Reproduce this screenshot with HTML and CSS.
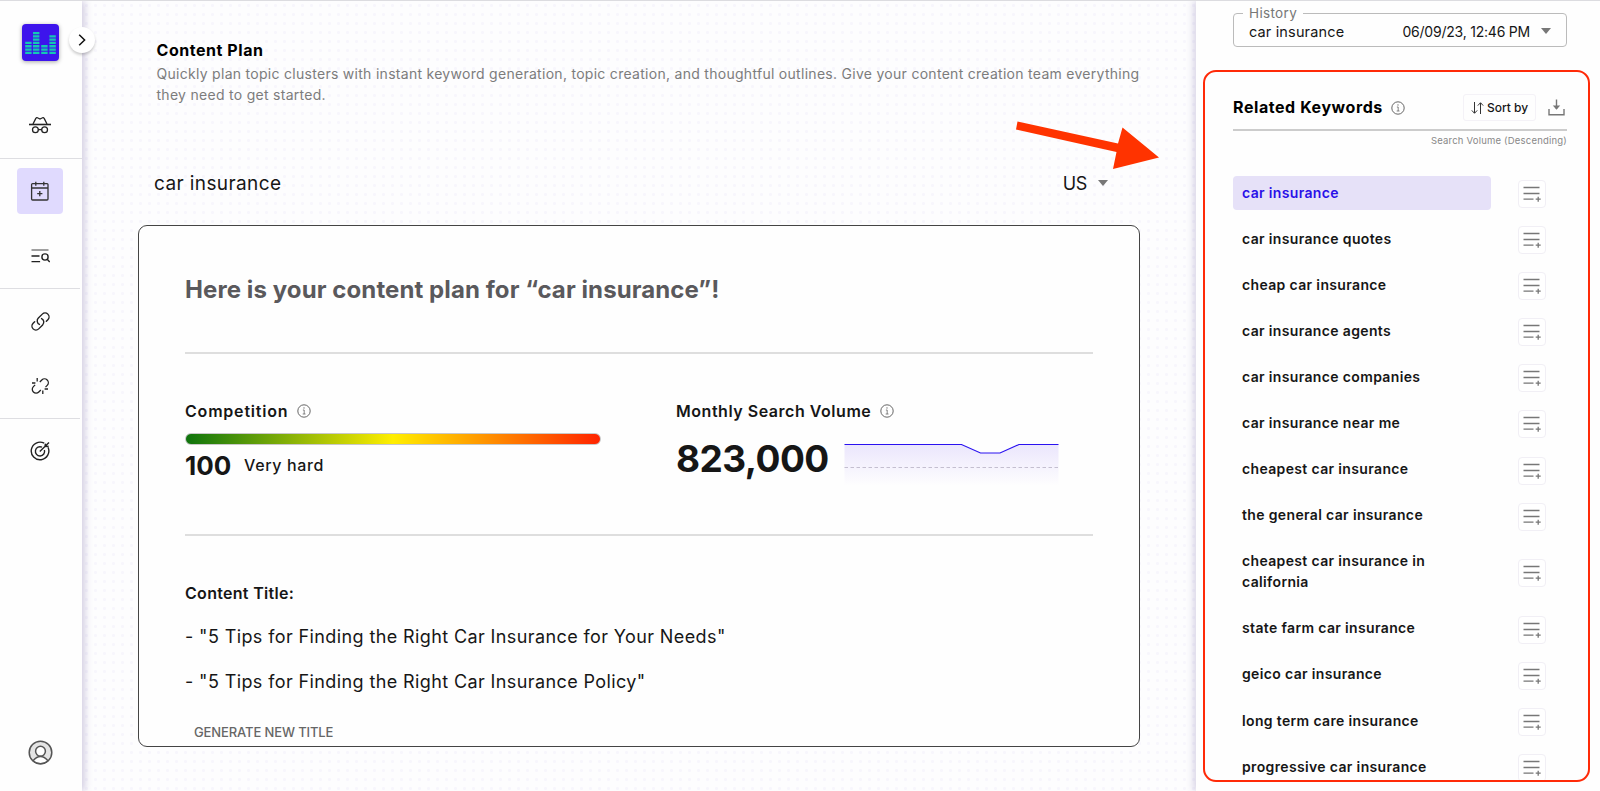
FILE: index.html
```html
<!DOCTYPE html>
<html lang="en">
<head>
    <meta charset="UTF-8">
    <meta name="viewport" content="width=device-width, initial-scale=1.0">
    <title>Content Plan</title>
    <link rel="stylesheet" href="styles.css">
</head>
<body>
    <!-- shared icons -->
    <svg class="sprite" width="0" height="0">
        <symbol id="info" viewBox="0 0 14 14">
            <circle cx="7" cy="7" r="6.2" fill="none" stroke="#555" stroke-width="0.9"/>
            <path d="M5.9 6h1.3v4M5.7 10h2.8" fill="none" stroke="#666" stroke-width="0.8"/>
            <circle cx="7" cy="3.9" r="0.6" fill="#555"/>
        </symbol>
        <symbol id="list-add" viewBox="0 0 18 16">
            <path d="M0.500 1.500h16M0.500 7.500h16M0.500 13.200h10M12.700 13.200h5M15.200 10.700v5" fill="none" stroke="#777" stroke-width="1.3"/>
        </symbol>
    </svg>

    <div class="app">
        <nav class="sidebar">
            <div class="logo">
                <svg width="37" height="37" viewBox="0 0 37 37">
                    <g fill="none" stroke="#14c8b4" stroke-width="6.4" stroke-dasharray="2.3 1">
                        <path d="M6.4 30V17"/>
                        <path d="M14.2 30V7"/>
                        <path d="M22.4 30V20.5"/>
                        <path d="M30.6 30V10.3"/>
                    </g>
                </svg>
            </div>
            <a class="nav-item">
                <svg width="24" height="18" viewBox="0 0 24 18">
                    <g fill="none" stroke="#222" stroke-width="1.3">
                        <path d="M1 8.5h22" stroke-width="1.6"/>
                        <path d="M5 8L7.7 2.6Q8.6 1 10 2l2 1 2-1q1.4-1 2.3.6L19 8"/>
                        <circle cx="7.4" cy="13.8" r="2.9"/>
                        <circle cx="16.6" cy="13.8" r="2.9"/>
                        <path d="M10.3 13.6h3.4"/>
                    </g>
                </svg>
            </a>
            <hr class="wide">
            <a class="nav-item active">
                <svg width="20" height="20" viewBox="0 0 20 20">
                    <g fill="none" stroke="#333" stroke-width="1.3">
                        <rect x="1.6" y="2.6" width="16.4" height="16.4" rx="1"/>
                        <path d="M1.6 7h16.4M5.8 0.8v4M13.8 0.8v4M9.8 10v5.2M7.2 12.6h5.2"/>
                    </g>
                </svg>
            </a>
            <a class="nav-item">
                <svg width="20" height="16" viewBox="0 0 20 16">
                    <g fill="none" stroke="#222" stroke-width="1.4">
                        <path d="M1.5 2h17" stroke="#777"/>
                        <path d="M1.5 8h8M1.5 13.6h8.6"/>
                        <circle cx="15" cy="9" r="3.1"/>
                        <path d="M17.2 11.2l2.5 2.8"/>
                    </g>
                </svg>
            </a>
            <hr>
            <a class="nav-item">
                <svg width="21" height="21" viewBox="0 0 24 24">
                    <path d="M13.190 8.688a4.500 4.500 0 0 1 1.242 7.244l-4.500 4.500a4.500 4.500 0 0 1-6.364-6.364l1.757-1.757m13.350-.622l1.757-1.757a4.500 4.500 0 0 0-6.364-6.364l-4.500 4.500a4.500 4.500 0 0 0 1.242 7.244" fill="none" stroke="#222" stroke-width="1.600" stroke-linecap="round"/>
                </svg>
            </a>
            <a class="nav-item">
                <svg width="18" height="18" viewBox="0 0 18 18">
                    <g fill="none" stroke="#222" stroke-width="1.3">
                        <path d="M8.8 5l2-2A3.8 3.8 0 0 1 16.2 8.400l-1.700 1.700"/>
                        <path d="M4.100 7.900L2.400 9.600a3.800 3.800 0 0 0 5.400 5.400l2-2"/>
                        <path d="M6.200 1v3.400M1 6h3.400M13.600 12H17M11.800 13.600V17"/>
                    </g>
                </svg>
            </a>
            <hr>
            <a class="nav-item">
                <svg width="21" height="20" viewBox="0 0 21 20">
                    <g fill="none" stroke="#222" stroke-width="1.4">
                        <path d="M14.200 2.200A8.800 8.800 0 1 0 18 6.200"/>
                        <path d="M12 6.200A4.600 4.600 0 1 0 14.400 9"/>
                        <path d="M9.800 10.600L19 1.600M15 5.600l.4-3M15 5.600l3.600-.4"/>
                    </g>
                </svg>
            </a>
            <a class="avatar">
                <svg width="25" height="25" viewBox="0 0 25 25">
                    <circle cx="12.500" cy="12.500" r="11.300" fill="#e4e4e4" stroke="#555" stroke-width="1.500"/>
                    <path d="M5 20.700q7.500-8.400 15 0Q12.500 27 5 20.700z" fill="#fff" stroke="#555" stroke-width="1.400"/>
                    <circle cx="12.500" cy="11.200" r="4.900" fill="#fff" stroke="#555" stroke-width="1.500"/>
                </svg>
            </a>
            <button class="expand">
                <svg width="8" height="12" viewBox="0 0 8 12"><path d="M1.200 0.800L6.600 6l-5.400 5.200" fill="none" stroke="#111" stroke-width="1.500"/></svg>
            </button>
        </nav>

        <main class="main">
            <header class="intro">
                <h1>Content Plan</h1>
                <p>Quickly plan topic clusters with instant keyword generation, topic creation, and thoughtful outlines. Give your content creation team everything<br>they need to get started.</p>
            </header>
            <div class="query">
                <span class="query-text">car insurance</span>
                <span class="country">US</span>
                <i class="caret"></i>
            </div>
            <section class="card">
                <h2>Here is your content plan for “car insurance”!</h2>
                <div class="metrics">
                    <div class="competition">
                        <h3><span>Competition</span><svg width="14" height="14"><use href="#info"/></svg></h3>
                        <div class="meter"></div>
                        <div class="score"><b>100</b><span>Very hard</span></div>
                    </div>
                    <div class="volume">
                        <h3><span>Monthly Search Volume</span><svg width="14" height="14"><use href="#info"/></svg></h3>
                        <div class="volume-row">
                            <b>823,000</b>
                            <svg width="215" height="44" viewBox="0 0 215 44">
                                <defs>
                                    <linearGradient id="fade" x1="0" y1="0" x2="0" y2="1">
                                        <stop offset="0" stop-color="#ebe6fc"/>
                                        <stop offset="1" stop-color="#ebe6fc" stop-opacity="0"/>
                                    </linearGradient>
                                </defs>
                                <path d="M0.500 1.500H117.500L136.500 10H156L175 1.500H214.500V43H0.500z" fill="url(#fade)"/>
                                <path d="M0.500 24.500H214" stroke="#c4bfd0" stroke-dasharray="3.500 2.500"/>
                                <path d="M0.500 1.500H117.500L136.500 10H156L175 1.500H214.500" fill="none" stroke="#2a12f0" stroke-width="1.200"/>
                            </svg>
                        </div>
                    </div>
                </div>
                <div class="titles">
                    <h4>Content Title:</h4>
                    <p>- "5 Tips for Finding the Right Car Insurance for Your Needs"</p>
                    <p>- "5 Tips for Finding the Right Car Insurance Policy"</p>
                    <button>GENERATE NEW TITLE</button>
                </div>
            </section>
        </main>

        <aside class="panel">
            <fieldset class="history">
                <legend>History</legend>
                <span class="history-query">car insurance</span>
                <span class="history-date">06/09/23, 12:46 PM</span>
                <i class="caret"></i>
            </fieldset>
            <div class="panel-head">
                <h2>Related Keywords</h2>
                <svg width="14" height="14"><use href="#info"/></svg>
                <button class="sort">
                    <svg width="13" height="14" viewBox="0 0 13 14"><path d="M3.500 1v11M0.800 9.400l2.700 2.900 2.700-2.900M9.500 13V2M6.800 4.600l2.700-2.900 2.700 2.900" fill="none" stroke="#333" stroke-width="1"/></svg>
                    <span>Sort by</span>
                </button>
                <svg class="download" width="17" height="17" viewBox="0 0 17 17">
                    <path d="M1 10v5.700h15V10M8.500 0.500V10" fill="none" stroke="#777" stroke-width="1.400"/>
                    <path d="M4.800 6.500h7.400L8.500 10.800z" fill="#777"/>
                </svg>
            </div>
            <p class="sort-note">Search Volume (Descending)</p>
            <ul class="keywords">
                <li class="selected"><span>car insurance</span><button><svg width="18" height="16"><use href="#list-add"/></svg></button></li>
                <li><span>car insurance quotes</span><button><svg width="18" height="16"><use href="#list-add"/></svg></button></li>
                <li><span>cheap car insurance</span><button><svg width="18" height="16"><use href="#list-add"/></svg></button></li>
                <li><span>car insurance agents</span><button><svg width="18" height="16"><use href="#list-add"/></svg></button></li>
                <li><span>car insurance companies</span><button><svg width="18" height="16"><use href="#list-add"/></svg></button></li>
                <li><span>car insurance near me</span><button><svg width="18" height="16"><use href="#list-add"/></svg></button></li>
                <li><span>cheapest car insurance</span><button><svg width="18" height="16"><use href="#list-add"/></svg></button></li>
                <li><span>the general car insurance</span><button><svg width="18" height="16"><use href="#list-add"/></svg></button></li>
                <li><span>cheapest car insurance in<br>california</span><button><svg width="18" height="16"><use href="#list-add"/></svg></button></li>
                <li><span>state farm car insurance</span><button><svg width="18" height="16"><use href="#list-add"/></svg></button></li>
                <li><span>geico car insurance</span><button><svg width="18" height="16"><use href="#list-add"/></svg></button></li>
                <li><span>long term care insurance</span><button><svg width="18" height="16"><use href="#list-add"/></svg></button></li>
                <li><span>progressive car insurance</span><button><svg width="18" height="16"><use href="#list-add"/></svg></button></li>
            </ul>
        </aside>

        <!-- callouts -->
        <div class="highlight"></div>
        <svg class="arrow" width="145" height="44" viewBox="0 0 145 44">
            <path d="M2.500 -3.500L103 18.500L107.500 2.500L144 32.500L98 44L101.500 27L1 4.500z" fill="#ff3300" transform="translate(0 -1)"/>
        </svg>
    </div>
</body>
</html>
```

FILE: styles.css
```css
* {
    box-sizing: border-box;
}
body {
    margin: 0;
    font-family: Inter, 'Open Sans', sans-serif;
    color: #161616;
    background-color: #fdfdfe;
}
h1, h2, h3, h4, p, ul {
    margin: 0;
    padding: 0;
}
button {
    font-family: inherit;
    border: none;
    background: none;
    padding: 0;
}
svg {
    display: block;
    flex: none;
}
.sprite {
    position: absolute;
}
.app {
    position: relative;
    display: flex;
    width: 1600px;
    height: 791px;
    overflow: hidden;
    border-top: 1px solid #dcdce0;
}

/* sidebar */
.sidebar {
    position: relative;
    z-index: 2;
    width: 82px;
    flex: none;
    display: flex;
    flex-direction: column;
    background-color: #fefefe;
    box-shadow: 3px 0 7px rgba(80, 60, 140, 0.24);
}
.logo {
    width: 37px;
    height: 37px;
    margin: 23px 0 41px 22px;
    border-radius: 4px;
    background-color: #3d14ec;
    box-shadow: 0 1px 4px rgba(0, 0, 0, 0.35);
}
.nav-item {
    width: 46px;
    height: 46px;
    margin: 0 0 19px 17px;
    display: flex;
    align-items: center;
    justify-content: center;
}
.logo + .nav-item {
    margin-bottom: 10px;
}
.sidebar hr {
    width: 80px;
    height: 1px;
    margin: -10px 0 9px;
    border: none;
    background-color: #dedee2;
}
.sidebar hr.wide {
    width: 82px;
    margin: 0 0 9px;
}
.nav-item.active {
    background-color: #e0dafe;
    border-radius: 4px;
}
.avatar {
    margin: auto 0 26px 27.5px;
}
.expand {
    position: absolute;
    left: 69px;
    top: 26px;
    width: 26px;
    height: 26px;
    display: flex;
    align-items: center;
    justify-content: center;
    border-radius: 50%;
    background-color: #fff;
    box-shadow: 0 2px 3px rgba(0, 0, 0, 0.2);
}

/* main column */
.main {
    width: 1114px;
    flex: none;
    padding: 37px 56px 0 56px;
    background-image: radial-gradient(#f7f6fc 1.2px, transparent 1.8px);
    background-size: 9px 9px;
}
.intro {
    height: 121px;
    padding-left: 18.500px;
}
.intro h1 {
    font-size: 16px;
    line-height: 24px;
    letter-spacing: 0.550px;
    color: #000;
}
.intro p {
    font-size: 14px;
    line-height: 21px;
    letter-spacing: 0.285px;
    color: #7c7c7c;
    white-space: nowrap;
    padding-top: 1px;
}
.query {
    height: 48px;
    margin-bottom: 18px;
    padding: 0 32px 0 16px;
    display: flex;
    align-items: center;
    font-size: 18px;
}
.query-text {
    font-size: 19px;
    letter-spacing: 0.400px;
}
.country {
    margin-left: auto;
    margin-right: 11px;
    letter-spacing: -0.400px;
}
.caret {
    border: 5.500px solid transparent;
    border-top: 6px solid #777;
    border-bottom: none;
}
.card {
    width: 1002px;
    height: 522px;
    padding: 0 46px;
    border: 1px solid #444;
    border-radius: 9px;
    background-color: #fefefe;
}
.card h2 {
    height: 128px;
    line-height: 127px;
    font-size: 24px;
    font-weight: 700;
    letter-spacing: 0.090px;
    color: #5a595c;
    border-bottom: 2px solid #dedede;
}
.metrics {
    height: 182px;
    display: flex;
    padding-top: 45px;
    border-bottom: 2px solid #dedede;
}
.competition {
    width: 491px;
}
.metrics h3 {
    height: 24px;
    display: flex;
    align-items: center;
    gap: 9px;
    font-size: 16px;
    font-weight: 600;
    letter-spacing: 0.530px;
}
.competition h3 {
    letter-spacing: 0.800px;
}
.meter {
    width: 416px;
    height: 12px;
    margin: 10px 0 8px;
    border: 1px solid #c8c8c8;
    border-radius: 6px;
    background: linear-gradient(90deg, #0d730d, #ffee00 50%, #ff2200) border-box;
}
.score {
    display: flex;
    align-items: center;
    height: 24px;
    font-size: 16px;
    font-weight: 500;
    letter-spacing: 0.650px;
}
.score b {
    width: 59px;
    font-size: 26px;
    letter-spacing: 0;
}
.volume-row {
    display: flex;
    padding-top: 20px;
    gap: 19px;
}
.volume-row b {
    width: 149px;
    height: 44px;
    font-size: 37px;
    line-height: 32px;
    letter-spacing: -0.550px;
    white-space: nowrap;
}
.titles {
    padding-top: 45px;
}
.titles h4 {
    font-size: 16px;
    line-height: 24px;
    font-weight: 600;
    letter-spacing: 0.300px;
    margin-bottom: 18px;
}
.titles p {
    font-size: 18px;
    line-height: 27px;
    letter-spacing: 0.390px;
    margin-bottom: 18px;
    white-space: nowrap;
}
.titles button {
    display: block;
    margin-top: 25px;
    padding-left: 9px;
    font-size: 13px;
    line-height: 24px;
    font-weight: 500;
    letter-spacing: -0.120px;
    color: #666;
}

/* right panel */
.panel {
    position: relative;
    width: 404px;
    flex: none;
    padding: 0 33px 0 37px;
    background-color: #fefefe;
    box-shadow: -3px 0 7px rgba(80, 60, 140, 0.2);
}
.history {
    height: 42px;
    margin: 4px 0 0;
    padding: 0 15px 5px 9px;
    display: flex;
    align-items: center;
    border: 1px solid #bbb;
    border-radius: 4px;
    font-size: 14.500px;
}
.history legend {
    height: 16px;
    padding: 0 6px;
    line-height: 16px;
    font-size: 13.500px;
    letter-spacing: 0.350px;
    color: #777;
}
.history-query {
    padding-left: 6px;
    letter-spacing: 0.150px;
}
.history-date {
    margin-left: auto;
    margin-right: 11px;
    font-size: 14px;
    letter-spacing: -0.220px;
}
.panel-head {
    height: 45px;
    margin-top: 39px;
    display: flex;
    align-items: center;
    border-bottom: 2px solid #ccc;
}
.panel-head h2 {
    font-size: 16px;
    line-height: 24px;
    letter-spacing: 0.570px;
    margin-right: 8px;
    padding-bottom: 2px;
    color: #000;
}
.sort {
    width: 73px;
    height: 27px;
    margin-left: auto;
    margin-right: 12px;
    display: flex;
    align-items: center;
    justify-content: center;
    gap: 3px;
    border: 1px solid #f4f2f7;
    border-radius: 3px;
    font-size: 12px;
    font-weight: 500;
    color: #161616;
    white-space: nowrap;
}
.download {
    margin-right: 2px;
}
.sort-note {
    height: 45px;
    padding-top: 2px;
    font-size: 9.500px;
    line-height: 15px;
    letter-spacing: 0.200px;
    text-align: right;
    color: #888;
}
.keywords {
    list-style: none;
}
.keywords li {
    display: flex;
    justify-content: space-between;
    padding-right: 21px;
    margin-bottom: 12.100px;
    align-items: center;
}
.keywords span {
    width: 258px;
    padding: 5.500px 9px 7.500px;
    border-radius: 4px;
    font-size: 14px;
    line-height: 21px;
    font-weight: 600;
    letter-spacing: 0.350px;
}
.keywords .selected span {
    background-color: #e6e1f8;
    color: #2a10e8;
}
.keywords button {
    width: 28px;
    height: 28px;
    display: flex;
    align-items: center;
    justify-content: center;
    border: 1px solid #f1eff5;
    border-radius: 4px;
    background-color: #fff;
    transform: translateY(1px);
}

/* callouts */
.highlight {
    position: absolute;
    z-index: 3;
    left: 1203px;
    top: 69px;
    width: 387px;
    height: 712px;
    border: 2px solid #ff2a08;
    border-radius: 13px;
}
.arrow {
    position: absolute;
    z-index: 3;
    left: 1015px;
    top: 125px;
    overflow: visible;
}
```
